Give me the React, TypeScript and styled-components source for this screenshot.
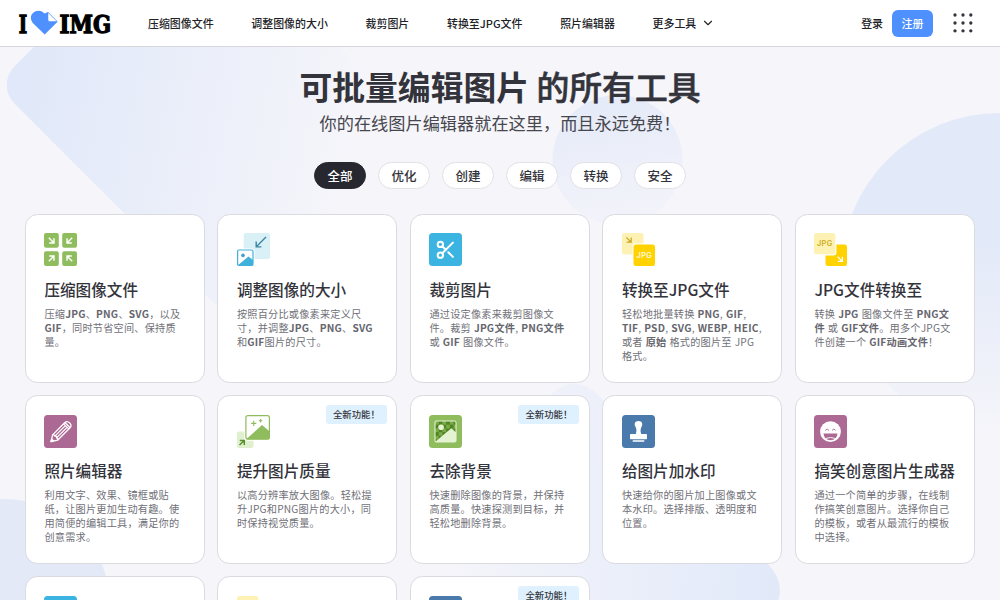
import React from "react";
import styled, { createGlobalStyle } from "styled-components";
import { ChevronDown, Scissors } from "lucide-react";

const GlobalStyle = createGlobalStyle`
  * {
    box-sizing: border-box;
  }
  body {
    margin: 0;
    font-family: "Noto Sans CJK SC", "Noto Sans", sans-serif;
    color: #33333b;
    background: #f5f5fa;
  }
  button {
    font-family: inherit;
    cursor: pointer;
  }
`;

const Page = styled.div`
  position: relative;
  width: 1000px;
  height: 600px;
  overflow: hidden;
  background: #f5f5fa;
`;

const Backdrop = styled.svg`
  position: absolute;
  top: 0;
  left: 0;
`;

const Header = styled.header`
  position: relative;
  height: 47px;
  padding: 0 27px 0 16px;
  display: flex;
  align-items: center;
  background: white;
  border-bottom: 1px solid #d6d6dc;
`;

const LogoLink = styled.a`
  display: flex;
  width: 132px;
`;

const Nav = styled.nav`
  flex: 1;
  display: flex;
  align-items: center;
  gap: 37.7px;
`;

const NavLink = styled.a`
  display: flex;
  align-items: center;
  gap: 5px;
  font-size: 10.94px;
  line-height: 16px;
  font-weight: 500;
  color: #222226;
  white-space: nowrap;
`;

const SignUp = styled.button`
  width: 41px;
  height: 27px;
  margin: 0 20px 0 9px;
  padding: 0;
  border: none;
  border-radius: 6px;
  background: #4d90fe;
  color: white;
  font-size: 10.94px;
  font-weight: 500;
`;

const Hero = styled.section`
  position: relative;
  display: flex;
  flex-direction: column;
  align-items: center;
  padding-top: 17px;
`;

const Title = styled.h1`
  margin: 0;
  font-size: 32.81px;
  line-height: 43px;
  font-weight: 700;
  white-space: nowrap;
  span {
    font-weight: 500;
    -webkit-text-stroke: 0.6px #33333b;
  }
`;

const SubTitle = styled.h2`
  margin: 2px 0 0;
  font-size: 17.19px;
  line-height: 27px;
  font-weight: 400;
  color: #47474f;
`;

const Filters = styled.div`
  display: flex;
  gap: 12px;
  margin-top: 26px;
`;

const FilterTab = styled.button`
  width: 52px;
  height: 27px;
  padding: 1px 0 0;
  border-radius: 14px;
  border: 1px solid #e0e0e6;
  background: white;
  color: #33333b;
  font-size: 12.5px;
  line-height: 24px;
  font-weight: 500;
  &.selected {
    border-color: #272730;
    background: #272730;
    color: white;
  }
`;

const Grid = styled.main`
  position: relative;
  display: grid;
  grid-template-columns: repeat(5, 1fr);
  grid-auto-rows: 169px;
  gap: 12.2px 12.5px;
  padding: 25px 25.1px 0 24.9px;
`;

const CardBox = styled.article`
  position: relative;
  padding: 18.4px 0 0 18.5px;
  border: 1px solid #dadae1;
  border-radius: 12.5px;
  background: white;
`;

const CardTitle = styled.h3`
  margin: 10.7px 0 0;
  font-size: 15.625px;
  line-height: 24px;
  font-weight: 500;
  white-space: nowrap;
`;

const CardText = styled.p`
  margin: 5.7px 0 0;
  font-size: 10.16px;
  line-height: 14.06px;
  letter-spacing: 0.22px;
  word-spacing: 0.5px;
  color: #707078;
  white-space: nowrap;
  b {
    font-weight: 700;
    color: #66666e;
  }
`;

const Badge = styled.span`
  position: absolute;
  top: 9px;
  right: 9.5px;
  width: 61px;
  height: 19px;
  padding-left: 7px;
  border-radius: 3px;
  background: #dff1fe;
  font-size: 9.38px;
  line-height: 19px;
  font-weight: 500;
  white-space: nowrap;
`;

const IconSvg = styled.svg`
  display: block;
  width: 33px;
  height: 33px;
`;

const IconTile = styled.div<{ $color: string }>`
  width: 33px;
  height: 33px;
  display: flex;
  align-items: center;
  justify-content: center;
  border-radius: 3.5px;
  background: ${({ $color }) => $color};
`;

const Logo = () => (
  <svg width="100" height="34" viewBox="-2 -4 100 34">
    <g
      fontFamily='"DejaVu Serif", serif'
      fontWeight="700"
      fontSize="24"
      stroke="#000"
      strokeWidth="1.3"
    >
      <text x="0.8" y="22.6" textLength="8.4" lengthAdjust="spacingAndGlyphs">
        I
      </text>
      <text x="41.6" y="22.6" textLength="51.4" lengthAdjust="spacingAndGlyphs">
        IMG
      </text>
    </g>
    <path
      d="M26.7 24.4 14.8 12.9C9.2 5.6 16.9-1.5 24 1.5L26.6 3.6 30 2 39.6 11.8z"
      fill="#4d90fe"
    />
    <path
      d="M30 2.4V9.9Q30 11.5 31.6 11.5H39.2z"
      fill="white"
      stroke="#4d90fe"
      strokeWidth="0.5"
    />
  </svg>
);

const Dots = () => (
  <svg width="20" height="20" viewBox="0 0 20 20" fill="#33333b">
    {[2, 10, 17.8].map((y) =>
      [2, 10, 17.8].map((x) => <circle key={`${x}-${y}`} cx={x} cy={y} r="1.65" />)
    )}
  </svg>
);

const CompressIcon = () => (
  <IconSvg viewBox="0 0 33 33">
    <g fill="#8fbc5d">
      <rect width="14.8" height="14.8" rx="2" />
      <rect x="18.2" width="14.8" height="14.8" rx="2" />
      <rect y="18.2" width="14.8" height="14.8" rx="2" />
      <rect x="18.2" y="18.2" width="14.8" height="14.8" rx="2" />
    </g>
    <g fill="none" stroke="white" strokeWidth="1.4">
      <path d="M4.8 4.8 9.8 9.8M10 5.2V10H5.2" />
      <path d="M28.2 4.8 23.2 9.8M23 5.2V10H27.8" />
      <path d="M4.8 28.2 9.8 23.2M10 27.8V23H5.2" />
      <path d="M28.2 28.2 23.2 23.2M23 27.8V23H27.8" />
    </g>
  </IconSvg>
);

const ResizeIcon = () => (
  <IconSvg viewBox="0 0 33 33">
    <rect x="6.7" width="26.3" height="26" rx="2.5" fill="#d9f0f7" />
    <path d="M29 4 19.5 13.6M19.2 8.6V13.9H24.4" fill="none" stroke="#3d86a3" strokeWidth="1.4" />
    <rect x="-1" y="15.4" width="18.6" height="18.6" rx="2.5" fill="white" />
    <rect x="0.6" y="17" width="15.4" height="15.4" rx="1.2" fill="white" stroke="#3fb1da" strokeWidth="1.2" />
    <circle cx="6" cy="22.4" r="1.8" fill="#3fa0c8" />
    <path d="M1.2 32 11.5 23.4 16 27V32.4H1.2z" fill="#3fb1da" />
  </IconSvg>
);

const ToJpgIcon = () => (
  <IconSvg viewBox="0 0 33 33">
    <rect width="21.5" height="21.5" rx="2.5" fill="#fdf2b3" />
    <path d="M4.3 4.3 9 9M9.2 4.6V9.2H4.6" fill="none" stroke="#c9a71c" strokeWidth="1.2" />
    <rect x="10.4" y="10.4" width="23.6" height="23.6" rx="3" fill="white" />
    <rect x="11.5" y="11.5" width="21.5" height="21.5" rx="2.5" fill="#ffd200" />
    <text x="14.6" y="25" textLength="15.2" fontFamily="Inter, sans-serif" fontSize="7.3" fontWeight="600" fill="#fffbe0">
      JPG
    </text>
  </IconSvg>
);

const FromJpgIcon = () => (
  <IconSvg viewBox="0 0 33 33">
    <rect x="11.5" y="11.5" width="21.5" height="21.5" rx="2.5" fill="#ffd200" />
    <path d="M23.6 23.6 28.2 28.2M28.4 23.8V28.4H23.8" fill="none" stroke="white" strokeWidth="1.3" />
    <rect x="-1" y="-1" width="23.4" height="23.4" rx="3" fill="white" />
    <rect width="21.3" height="21.3" rx="2.5" fill="#fdf2b3" />
    <text x="3" y="13.3" textLength="15.2" fontFamily="Inter, sans-serif" fontSize="7.3" fontWeight="600" fill="#cfac17">
      JPG
    </text>
  </IconSvg>
);

const PencilIcon = () => (
  <IconTile $color="#ab6993">
    <IconSvg viewBox="0 0 33 33">
      <g
        transform="translate(7 26.7) rotate(-45)"
        fill="none"
        stroke="white"
        strokeWidth="1.3"
        strokeLinejoin="round"
      >
        <path d="M0 0 6-3.7H23Q26.4-3.7 26.4 0T23 3.7H6z" />
        <path d="M6-3.7Q7.6-2.5 6.6-1.2 8.6 0 6.6 1.2 7.6 2.5 6 3.7M7-1.2H21.5M7 1.2H21.5M21.5-3.7V3.7M23.4-3.7V3.7" />
        <path d="M0 0 2.4-1.4V1.4z" fill="white" />
      </g>
    </IconSvg>
  </IconTile>
);

const UpscaleIcon = () => (
  <IconSvg viewBox="0 0 33 33">
    <rect y="16.4" width="16.5" height="16.6" rx="2" fill="#e0f0cf" />
    <path d="M2.5 30 7 25.7M2.8 25.5H7.3V30" fill="none" stroke="#558f2e" strokeWidth="1.5" />
    <rect x="7.2" y="-1" width="26.8" height="26.8" rx="3" fill="white" />
    <rect x="8.9" y="0.6" width="23.5" height="23.5" rx="2" fill="white" stroke="#8fbc5d" strokeWidth="1.2" />
    <path d="M9.4 24 25 10 32.4 16.2V24.2H9.4z" fill="#8fbc5d" />
    <path d="M16.7 5.8V11M14.1 8.4H19.3M23.6 4V7.4M21.9 5.7H25.3" stroke="#8fbc5d" strokeWidth="1.1" />
  </IconSvg>
);

const RemoveBgIcon = () => (
  <IconTile $color="#8fbc5d">
    <IconSvg viewBox="0 0 33 33">
      <clipPath id="photo">
        <rect x="6" y="6" width="21" height="21" rx="1.5" />
      </clipPath>
      <g clipPath="url(#photo)">
        <rect x="6" y="6" width="21" height="21" fill="#7cab45" />
        {[0, 1, 2, 3, 4, 5].map((row) =>
          [0, 1, 2, 3, 4, 5].map((col) =>
            (row + col) % 2 ? (
              <rect key={`${row}-${col}`} x={6 + col * 3.7} y={6 + row * 3.7} width="3.7" height="3.7" fill="#4f8427" />
            ) : null
          )
        )}
        <path d="M6 27 19 16 22.5 13.5 27.5 18V27z" fill="#e4f3d2" />
      </g>
      <circle cx="12.1" cy="12.2" r="2.8" fill="#e4f3d2" />
      <rect x="6" y="6" width="21" height="21" rx="1.5" fill="none" stroke="#e4f3d2" strokeWidth="1.1" />
    </IconSvg>
  </IconTile>
);

const StampIcon = () => (
  <IconTile $color="#4a79ab">
    <IconSvg viewBox="0 0 33 33" fill="white">
      <path d="M16.5 6C12.9 6 12 9.1 13.2 11.2 14.5 13.4 14.9 15.6 13.8 19H19.2C18.1 15.6 18.5 13.4 19.8 11.2 21 9.1 20.1 6 16.5 6z" />
      <rect x="8" y="19" width="17" height="5.3" rx="0.8" />
      <rect x="10.6" y="25.2" width="11.8" height="1.5" rx="0.5" />
    </IconSvg>
  </IconTile>
);

const MemeIcon = () => (
  <IconTile $color="#ab6993">
    <IconSvg viewBox="0 0 33 33">
      <circle cx="16.5" cy="16.7" r="10.4" fill="white" />
      <path
        d="M11.3 15.4Q13.1 12.6 15 15.4M18 15.4Q19.9 12.6 21.7 15.4"
        fill="none"
        stroke="#ab6993"
        strokeWidth="0.9"
      />
      <path d="M9.5 18.6H23.5Q23 25.2 16.5 25.2T9.5 18.6z" fill="#ab6993" />
      <path d="M12 23.4Q16.5 21.6 21 23.4" fill="none" stroke="white" strokeWidth="0.9" />
    </IconSvg>
  </IconTile>
);

const HtmlIcon = () => (
  <IconSvg viewBox="0 0 33 33">
    <rect width="21.3" height="21.3" rx="2.5" fill="#fdf2b3" />
  </IconSvg>
);

type Tool = {
  icon: React.ReactNode;
  title?: string;
  text?: React.ReactNode;
  isNew?: boolean;
};

const tools: Tool[] = [
  {
    icon: <CompressIcon />,
    title: "压缩图像文件",
    text: (
      <>
        压缩<b>JPG</b>、<b>PNG</b>、<b>SVG</b>，以及
        <br />
        <b>GIF</b>，同时节省空间、保持质
        <br />
        量。
      </>
    ),
  },
  {
    icon: <ResizeIcon />,
    title: "调整图像的大小",
    text: (
      <>
        按照百分比或像素来定义尺
        <br />
        寸，并调整<b>JPG</b>、<b>PNG</b>、<b>SVG</b>
        <br />
        和<b>GIF</b>图片的尺寸。
      </>
    ),
  },
  {
    icon: (
      <IconTile $color="#3bb4e2">
        <Scissors size={21.5} color="white" strokeWidth={2.2} />
      </IconTile>
    ),
    title: "裁剪图片",
    text: (
      <>
        通过设定像素来裁剪图像文
        <br />
        件。裁剪 <b>JPG文件</b>, <b>PNG文件</b>
        <br />或 <b>GIF</b> 图像文件。
      </>
    ),
  },
  {
    icon: <ToJpgIcon />,
    title: "转换至JPG文件",
    text: (
      <>
        轻松地批量转换 <b>PNG</b>, <b>GIF</b>,
        <br />
        <b>TIF</b>, <b>PSD</b>, <b>SVG</b>, <b>WEBP</b>, <b>HEIC</b>,
        <br />
        或者 <b>原始</b> 格式的图片至 JPG
        <br />
        格式。
      </>
    ),
  },
  {
    icon: <FromJpgIcon />,
    title: "JPG文件转换至",
    text: (
      <>
        转换 <b>JPG</b> 图像文件至 <b>PNG文</b>
        <br />
        <b>件</b> 或 <b>GIF文件</b>。用多个JPG文
        <br />
        件创建一个 <b>GIF动画文件</b>！
      </>
    ),
  },
  {
    icon: <PencilIcon />,
    title: "照片编辑器",
    text: (
      <>
        利用文字、效果、镜框或贴
        <br />
        纸，让图片更加生动有趣。使
        <br />
        用简便的编辑工具，满足你的
        <br />
        创意需求。
      </>
    ),
  },
  {
    icon: <UpscaleIcon />,
    title: "提升图片质量",
    isNew: true,
    text: (
      <>
        以高分辨率放大图像。轻松提
        <br />
        升JPG和PNG图片的大小，同
        <br />
        时保持视觉质量。
      </>
    ),
  },
  {
    icon: <RemoveBgIcon />,
    title: "去除背景",
    isNew: true,
    text: (
      <>
        快速删除图像的背景，并保持
        <br />
        高质量。快速探测到目标，并
        <br />
        轻松地删除背景。
      </>
    ),
  },
  {
    icon: <StampIcon />,
    title: "给图片加水印",
    text: (
      <>
        快速给你的图片加上图像或文
        <br />
        本水印。选择排版、透明度和
        <br />
        位置。
      </>
    ),
  },
  {
    icon: <MemeIcon />,
    title: "搞笑创意图片生成器",
    text: (
      <>
        通过一个简单的步骤，在线制
        <br />
        作搞笑创意图片。选择你自己
        <br />
        的模板，或者从最流行的模板
        <br />
        中选择。
      </>
    ),
  },
  { icon: <IconTile $color="#3bb4e2" /> },
  { icon: <HtmlIcon /> },
  { icon: <IconTile $color="#4a79ab" />, isNew: true },
];

const Card: React.FC<Tool> = ({ icon, title, text, isNew }) => (
  <CardBox>
    {icon}
    {isNew && <Badge>全新功能！</Badge>}
    {title && <CardTitle>{title}</CardTitle>}
    {text && <CardText>{text}</CardText>}
  </CardBox>
);

const Shapes = () => (
  <Backdrop width="1000" height="600" viewBox="0 0 1000 600">
    <defs>
      <linearGradient id="left" gradientUnits="userSpaceOnUse" x1="10" y1="30" x2="290" y2="210">
        <stop offset="0" stopColor="#e0e8f9" />
        <stop offset="1" stopColor="#e0e8f9" stopOpacity="0" />
      </linearGradient>
      <linearGradient id="center" x1="0.4" y1="0" x2="0.6" y2="1">
        <stop offset="0" stopColor="#e4eaf8" />
        <stop offset="1" stopColor="#e9edfa" stopOpacity="0.2" />
      </linearGradient>
      <linearGradient id="right" x1="0" y1="0" x2="0" y2="1">
        <stop offset="0.4" stopColor="#e2e9f8" />
        <stop offset="1" stopColor="#e2e9f8" stopOpacity="0" />
      </linearGradient>
      <linearGradient id="bottom" gradientUnits="userSpaceOnUse" x1="450" y1="560" x2="780" y2="580">
        <stop offset="0" stopColor="#e1e9f9" stopOpacity="0" />
        <stop offset="1" stopColor="#e1e9f9" />
      </linearGradient>
    </defs>
    {/* matrix mixes rotation and mirroring, so the corner at (0, 0) points left */}
    <rect
      x="0"
      y="0"
      width="330"
      height="270"
      rx="26"
      fill="url(#left)"
      transform="matrix(0.7071 0.7071 0.7071 -0.7071 -4 85)"
    />
    <circle cx="617.5" cy="160" r="65" fill="url(#center)" />
    <circle cx="1000" cy="272" r="159" fill="url(#right)" />
    <circle cx="4" cy="605" r="106" fill="#e3e9f7" />
    <path
      d="M553 393Q577 373 599 396L767 563Q793 590 767 617L700 684H400V546z"
      fill="url(#bottom)"
    />
  </Backdrop>
);

const navItems = ["压缩图像文件", "调整图像的大小", "裁剪图片", "转换至JPG文件", "照片编辑器"];
const filters = ["全部", "优化", "创建", "编辑", "转换", "安全"];

const App = () => {
  const [filter, setFilter] = React.useState("全部");

  return (
    <Page>
      <GlobalStyle />
      <Shapes />
      <Header>
        <LogoLink>
          <Logo />
        </LogoLink>
        <Nav>
          {navItems.map((item) => (
            <NavLink key={item}>{item}</NavLink>
          ))}
          <NavLink>
            更多工具
            <ChevronDown size={14} strokeWidth={1.9} />
          </NavLink>
        </Nav>
        <NavLink>登录</NavLink>
        <SignUp>注册</SignUp>
        <Dots />
      </Header>
      <Hero>
        <Title>
          可批量编辑图片 <span>的所有工具</span>
        </Title>
        <SubTitle>你的在线图片编辑器就在这里，而且永远免费！</SubTitle>
        <Filters>
          {filters.map((item) => (
            <FilterTab
              key={item}
              className={item === filter ? "selected" : ""}
              onClick={() => setFilter(item)}
            >
              {item}
            </FilterTab>
          ))}
        </Filters>
      </Hero>
      <Grid>
        {tools.map((tool, i) => (
          <Card key={i} {...tool} />
        ))}
      </Grid>
    </Page>
  );
};

export default App;
